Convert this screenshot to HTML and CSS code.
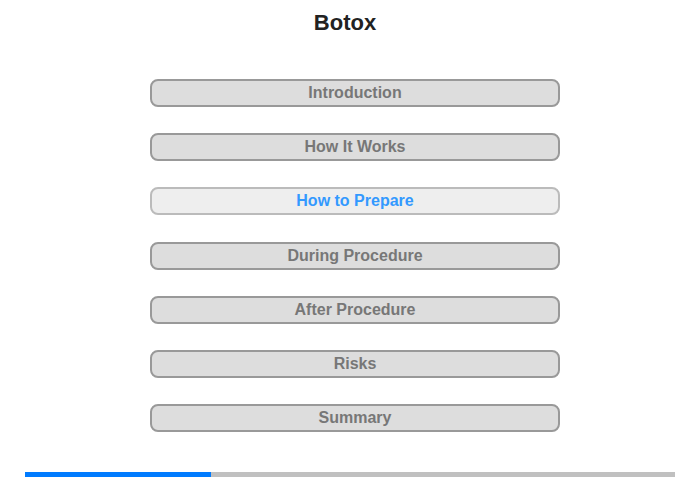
FILE: index.html
```html
<!DOCTYPE html>
<html lang="en">
<head>
    <meta charset="UTF-8">
    <meta name="viewport" content="width=device-width, initial-scale=1.0">
    <title>Botox</title>
    <link rel="stylesheet" href="styles.css">
</head>
<body>
    <h1 class="title">Botox</h1>
    <div class="menu">
        <button class="menu-item">Introduction</button>
        <button class="menu-item">How It Works</button>
        <button class="menu-item active">How to Prepare</button>
        <button class="menu-item">During Procedure</button>
        <button class="menu-item">After Procedure</button>
        <button class="menu-item">Risks</button>
        <button class="menu-item">Summary</button>
    </div>
    <div class="progress">
        <div class="progress-fill" style="width: 28.6%"></div>
    </div>
</body>
</html>
```

FILE: styles.css
```css
body {
    margin: 0;
    font-family: "Liberation Sans", Arial, sans-serif;
    background-color: #fff;
    width: 700px;
    height: 480px;
}
.title {
    margin: 0;
    padding: 10px 10px 0 0;
    font-size: 22px;
    line-height: 26px;
    text-align: center;
    color: #222;
}
.menu {
    display: flex;
    flex-direction: column;
    align-items: center;
    gap: 26.2px;
    margin-top: 43px;
    padding-left: 10px;
}
.menu-item {
    box-sizing: border-box;
    width: 410px;
    height: 28px;
    padding: 0;
    background-color: #ddd;
    border: 2px solid #999;
    border-radius: 8px;
    font-family: inherit;
    font-size: 16px;
    font-weight: bold;
    color: #777;
    cursor: pointer;
}
.menu-item.active {
    background-color: #eee;
    border-color: #bbb;
    color: #3399ff;
}
.progress {
    margin: 40px 0 0 25px;
    width: 650px;
    height: 5px;
    background-color: #c0c0c0;
}
.progress-fill {
    height: 100%;
    background-color: #007bff;
}
```
